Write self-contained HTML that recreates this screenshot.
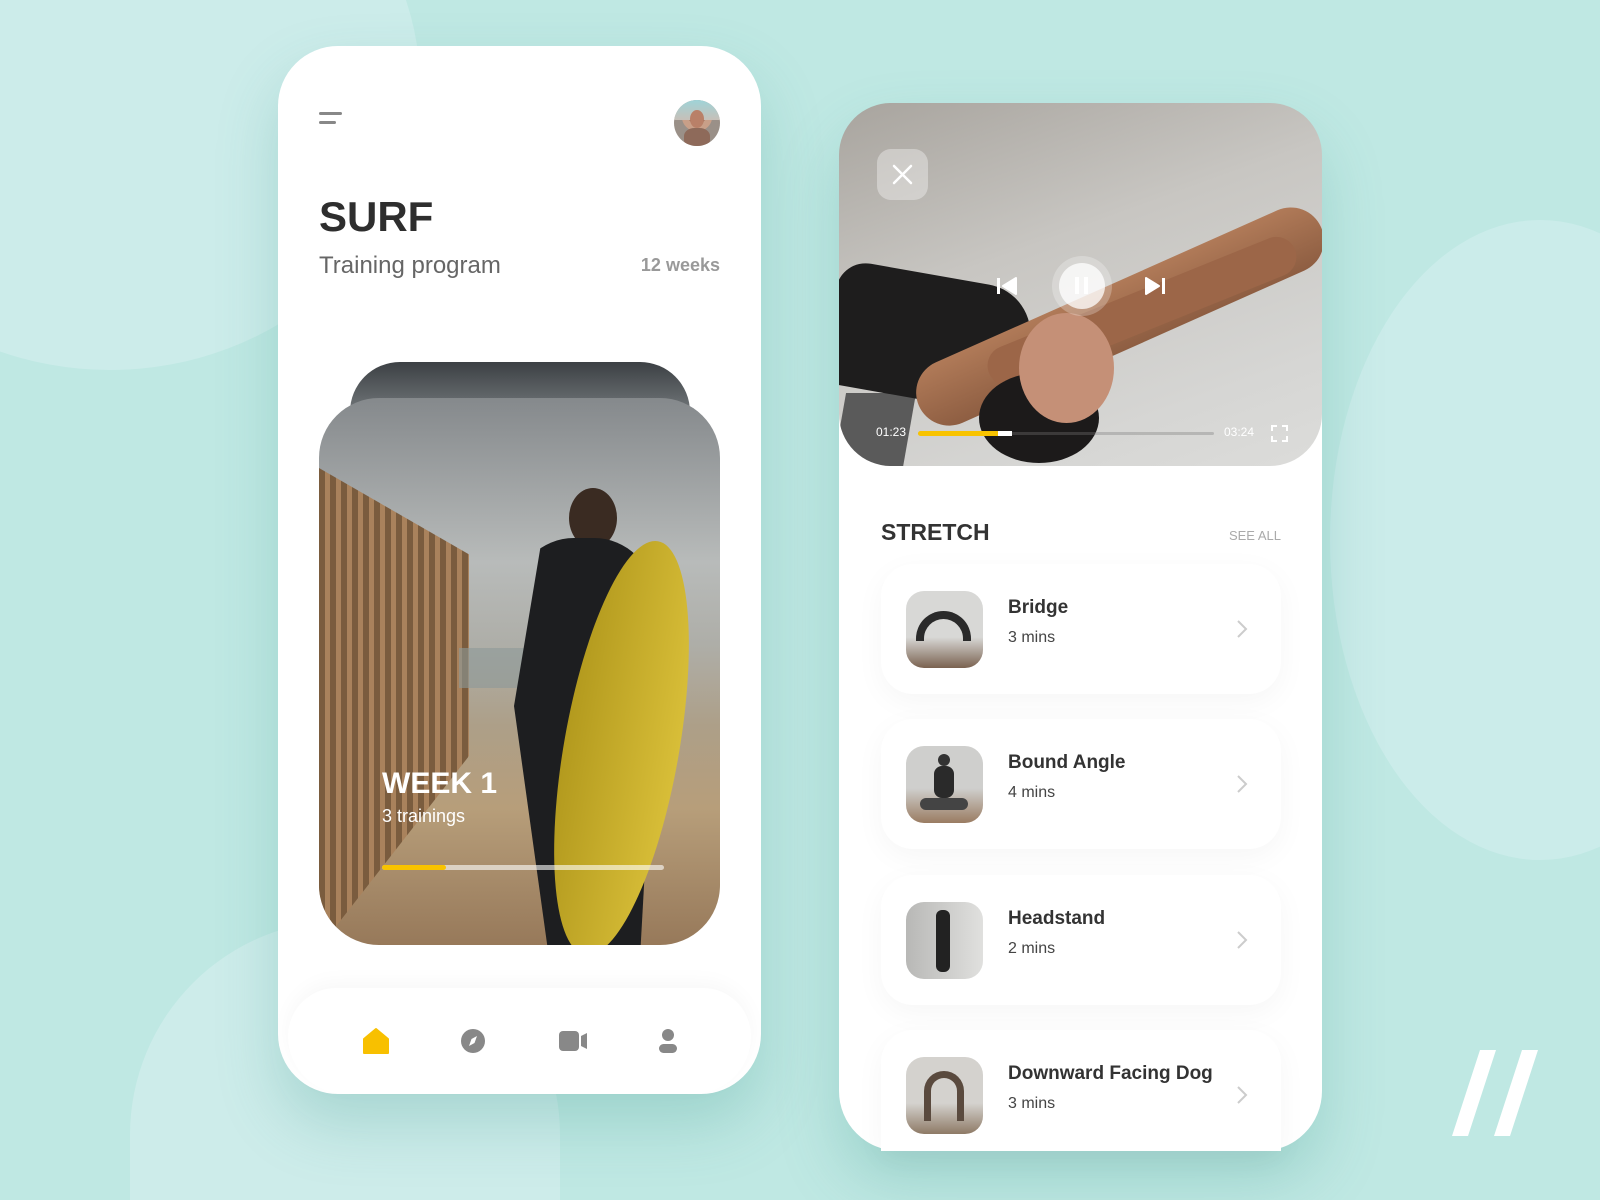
<!DOCTYPE html>
<html><head><meta charset="utf-8"><style>
*{margin:0;padding:0;box-sizing:border-box}
html,body{width:1600px;height:1200px;overflow:hidden;background:#bfe8e3}
body{font-family:"Liberation Sans",sans-serif}
#root{position:relative;width:1600px;height:1200px;overflow:hidden}
.abs{position:absolute}
.phone{position:absolute;background:#fff;border-radius:60px;box-shadow:0 30px 60px rgba(60,150,140,.25)}
.card{position:absolute;left:881px;width:400px;height:130px;background:#fff;border-radius:32px;box-shadow:0 8px 30px rgba(0,0,0,.04)}
.thumb{position:absolute;left:25px;top:27px;width:77px;height:77px;border-radius:18px;overflow:hidden}
.t1{position:absolute;left:127px;top:33px;font-size:19px;font-weight:bold;color:#333}
.t2{position:absolute;left:127px;top:65px;font-size:16px;color:#444}
.chev{position:absolute;left:355px;top:55px}
</style></head><body><div id="root">
<div class="abs" style="left:-200px;top:-200px;width:620px;height:570px;border-radius:50%;background:#ccecea"></div>
<div class="abs" style="left:1330px;top:220px;width:420px;height:640px;border-radius:50%;background:#cbecea"></div>
<div class="abs" style="left:130px;top:920px;width:430px;height:280px;border-radius:215px 215px 0 0;background:#cdecea"></div>

<div class="phone" style="left:278px;top:46px;width:483px;height:1048px"></div>
<div class="abs" style="left:319px;top:112px;width:23px;height:3px;background:#888;border-radius:2px"></div>
<div class="abs" style="left:319px;top:121px;width:17px;height:3px;background:#888;border-radius:2px"></div>
<div class="abs" style="left:674px;top:100px;width:46px;height:46px;border-radius:50%;background:radial-gradient(circle at 50% 35%,#6d4a3a 0 22%,#c89f88 23% 40%,#9a9088 41%);overflow:hidden"><div style="position:absolute;left:0;top:0;width:46px;height:20px;background:linear-gradient(#9fd4d8,#c7c0b8)"></div><div style="position:absolute;left:16px;top:10px;width:14px;height:18px;border-radius:50%;background:#b98068"></div><div style="position:absolute;left:10px;top:28px;width:26px;height:20px;border-radius:40%;background:#8e6a5a"></div></div>
<div class="abs" style="left:319px;top:193px;font-size:42px;font-weight:bold;color:#2e2e2e">SURF</div>
<div class="abs" style="left:319px;top:252px;font-size:24px;color:#666">Training program</div>
<div class="abs" style="left:600px;width:120px;text-align:right;top:255px;font-size:18px;color:#999;font-weight:bold">12 weeks</div>
<div class="abs" style="left:350px;top:362px;width:340px;height:120px;border-radius:50px 50px 0 0;background:linear-gradient(#3c4044,#888e90 60%,#c9cbcb)"></div>
<div class="abs" style="left:319px;top:398px;width:401px;height:547px;border-radius:60px;overflow:hidden;background:linear-gradient(#85898c,#b8bbba 30%,#aeaea8 45%,#ad9f88 60%,#b79e7a 75%,#97795a)">
 <div style="position:absolute;left:0;top:70px;width:150px;height:480px;background:repeating-linear-gradient(90deg,#7a5c3e 0 6px,#a9825c 6px 11px);clip-path:polygon(0 0,100% 18%,100% 60%,0 100%)"></div>
 <div style="position:absolute;left:140px;top:250px;width:80px;height:40px;background:#8c9a9a;opacity:.6"></div>
 <div style="position:absolute;left:250px;top:90px;width:48px;height:60px;border-radius:50%;background:#3a2b22"></div>
 <div style="position:absolute;left:195px;top:140px;width:140px;height:420px;border-radius:60px 60px 10px 10px;background:#1d1e20;clip-path:polygon(20% 0,85% 0,100% 40%,90% 100%,25% 100%,0 40%)"></div>
 <div style="position:absolute;left:245px;top:140px;width:115px;height:420px;border-radius:50%;background:linear-gradient(90deg,#b39a1e,#d8be38);transform:rotate(10deg)"></div>
</div>
<div class="abs" style="left:382px;top:767px;font-size:30px;font-weight:bold;color:#fff">WEEK 1</div>
<div class="abs" style="left:382px;top:806px;font-size:18px;color:#fff">3 trainings</div>
<div class="abs" style="left:382px;top:865px;width:282px;height:5px;border-radius:3px;background:rgba(255,255,255,.6)"></div>
<div class="abs" style="left:382px;top:865px;width:64px;height:5px;border-radius:3px;background:#f8c300"></div>
<div class="abs" style="left:288px;top:988px;width:463px;height:106px;border-radius:50px 50px 60px 60px;background:#fff;box-shadow:0 -6px 20px rgba(0,0,0,.03)"></div>
<svg class="abs" style="left:362px;top:1027px" width="28" height="28" viewBox="0 0 28 28"><path d="M2 12 L14 2 L26 12 V26 H2Z" fill="#f8c000" stroke="#f8c000" stroke-width="2" stroke-linejoin="round"/></svg>
<svg class="abs" style="left:460px;top:1028px" width="26" height="26" viewBox="0 0 26 26"><circle cx="13" cy="13" r="12" fill="#888"/><path d="M17 8 L14.5 15 L9 18 L11.5 11Z" fill="#fff"/></svg>
<svg class="abs" style="left:559px;top:1031px" width="28" height="20" viewBox="0 0 28 20"><rect x="0" y="0" width="20" height="20" rx="4" fill="#888"/><path d="M22 5 L28 2 V18 L22 15Z" fill="#888"/></svg>
<svg class="abs" style="left:658px;top:1028px" width="20" height="26" viewBox="0 0 20 26"><circle cx="10" cy="7" r="6" fill="#888"/><rect x="1" y="16" width="18" height="9" rx="4.5" fill="#888"/></svg>

<div class="phone" style="left:839px;top:103px;width:483px;height:1048px"></div>
<div class="abs" style="left:839px;top:103px;width:483px;height:363px;border-radius:52px;overflow:hidden;background:linear-gradient(160deg,#a8a49e,#c8c6c2 40%,#d6d6d4 80%,#dcdcda)">
 <div style="position:absolute;left:0;top:290px;width:70px;height:80px;background:#5a5a5a;transform:skewX(-10deg)"></div>
 <div style="position:absolute;left:-10px;top:172px;width:200px;height:125px;border-radius:30px 50px 60px 20px;background:#1e1d1d;transform:rotate(10deg)"></div>
 <div style="position:absolute;left:80px;top:270px;width:440px;height:66px;border-radius:34px;background:linear-gradient(#b07a58,#8e5e42);transform:rotate(-24deg);transform-origin:0 50%"></div>
 <div style="position:absolute;left:150px;top:250px;width:330px;height:40px;border-radius:30px;background:#9c6648;transform:rotate(-22deg);transform-origin:0 50%"></div>
 <div style="position:absolute;left:140px;top:270px;width:120px;height:90px;border-radius:50%;background:#1c1a1a"></div>
 <div style="position:absolute;left:180px;top:210px;width:95px;height:110px;border-radius:50%;background:#c59077"></div>
</div>
<div class="abs" style="left:877px;top:149px;width:51px;height:51px;border-radius:14px;background:rgba(255,255,255,.35)"></div>
<svg class="abs" style="left:890px;top:162px" width="25" height="25"><path d="M4 4L21 21M21 4L4 21" stroke="#fff" stroke-width="2.5" stroke-linecap="round"/></svg>
<svg class="abs" style="left:996px;top:276px" width="24" height="20"><rect x="1" y="2" width="3" height="16" fill="#fff"/><path d="M20 2 V18 L7 10Z" fill="#fff" stroke="#fff" stroke-linejoin="round" stroke-width="2"/></svg>
<div class="abs" style="left:1052px;top:256px;width:60px;height:60px;border-radius:50%;background:rgba(255,255,255,.25)"></div>
<div class="abs" style="left:1059px;top:263px;width:46px;height:46px;border-radius:50%;background:rgba(255,255,255,.75)"></div>
<div class="abs" style="left:1075px;top:277px;width:4px;height:17px;background:#fff"></div>
<div class="abs" style="left:1084px;top:277px;width:4px;height:17px;background:#fff"></div>
<svg class="abs" style="left:1142px;top:276px" width="24" height="20"><path d="M4 2 V18 L17 10Z" fill="#fff" stroke="#fff" stroke-linejoin="round" stroke-width="2"/><rect x="20" y="2" width="3" height="16" fill="#fff"/></svg>
<div class="abs" style="left:876px;top:425px;font-size:12px;color:#fff">01:23</div>
<div class="abs" style="left:918px;top:432px;width:296px;height:3px;border-radius:2px;background:rgba(120,120,120,.35)"></div>
<div class="abs" style="left:918px;top:431px;width:94px;height:5px;border-radius:3px;background:#f8c300"></div>
<div class="abs" style="left:998px;top:431px;width:14px;height:5px;background:#fff"></div>
<div class="abs" style="left:1224px;top:425px;font-size:12px;color:#fff">03:24</div>
<svg class="abs" style="left:1271px;top:425px" width="17" height="17"><path d="M1 6V1H6M11 1H16V6M16 11V16H11M6 16H1V11" fill="none" stroke="#fff" stroke-width="2"/></svg>

<div class="abs" style="left:881px;top:519px;font-size:23px;font-weight:bold;color:#333">STRETCH</div>
<div class="abs" style="left:1180px;width:101px;text-align:right;top:528px;font-size:13px;color:#aaa">SEE ALL</div>

<div class="card" style="top:564px"><div class="thumb" style="background:linear-gradient(#d8d8d6 60%,#7a6250)"><div style="position:absolute;left:10px;top:20px;width:55px;height:30px;border-radius:30px 30px 0 0;border:8px solid #2a2a2a;border-bottom:none"></div></div><div class="t1">Bridge</div><div class="t2">3 mins</div><svg class="chev" width="12" height="20"><path d="M2 2L10 10L2 18" fill="none" stroke="#ccc" stroke-width="2"/></svg></div>
<div class="card" style="top:719px"><div class="thumb" style="background:linear-gradient(#cfcfcd 55%,#9a7c62)"><div style="position:absolute;left:32px;top:8px;width:12px;height:12px;border-radius:50%;background:#333"></div><div style="position:absolute;left:28px;top:20px;width:20px;height:32px;background:#2a2a2a;border-radius:8px"></div><div style="position:absolute;left:14px;top:52px;width:48px;height:12px;border-radius:6px;background:#444"></div></div><div class="t1">Bound Angle</div><div class="t2">4 mins</div><svg class="chev" width="12" height="20"><path d="M2 2L10 10L2 18" fill="none" stroke="#ccc" stroke-width="2"/></svg></div>
<div class="card" style="top:875px"><div class="thumb" style="background:linear-gradient(90deg,#b8b8b6,#e0e0de)"><div style="position:absolute;left:30px;top:8px;width:14px;height:62px;background:#222;border-radius:6px"></div></div><div class="t1">Headstand</div><div class="t2">2 mins</div><svg class="chev" width="12" height="20"><path d="M2 2L10 10L2 18" fill="none" stroke="#ccc" stroke-width="2"/></svg></div>
<div class="card" style="top:1030px;height:121px;border-radius:32px 32px 0 0"><div class="thumb" style="background:linear-gradient(#d4d2ce 60%,#8e7a66)"><div style="position:absolute;left:18px;top:14px;width:40px;height:50px;border:7px solid #5a4a3e;border-bottom:none;border-radius:20px 20px 0 0"></div></div><div class="t1">Downward Facing Dog</div><div class="t2">3 mins</div><svg class="chev" width="12" height="20"><path d="M2 2L10 10L2 18" fill="none" stroke="#ccc" stroke-width="2"/></svg></div>

<svg class="abs" style="left:1450px;top:1048px" width="90" height="90"><path d="M30 2H46L18 88H2Z M72 2H88L60 88H44Z" fill="#fff"/></svg>
</div></body></html>
